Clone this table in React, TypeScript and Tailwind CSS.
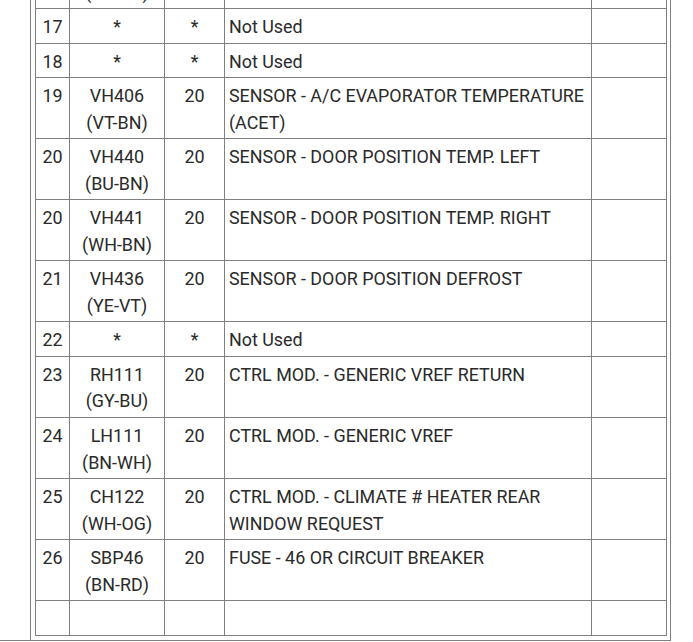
type Row = { pin: string; circuit?: string; color?: string; gauge: string; desc: string };

const rows: Row[] = [
  { pin: '16', circuit: 'VH402', color: '(GY-BN)', gauge: '20', desc: 'SENSOR - A/C PRESSURE' },
  { pin: '17', circuit: '*', gauge: '*', desc: 'Not Used' },
  { pin: '18', circuit: '*', gauge: '*', desc: 'Not Used' },
  { pin: '19', circuit: 'VH406', color: '(VT-BN)', gauge: '20', desc: 'SENSOR - A/C EVAPORATOR TEMPERATURE (ACET)' },
  { pin: '20', circuit: 'VH440', color: '(BU-BN)', gauge: '20', desc: 'SENSOR - DOOR POSITION TEMP. LEFT' },
  { pin: '20', circuit: 'VH441', color: '(WH-BN)', gauge: '20', desc: 'SENSOR - DOOR POSITION TEMP. RIGHT' },
  { pin: '21', circuit: 'VH436', color: '(YE-VT)', gauge: '20', desc: 'SENSOR - DOOR POSITION DEFROST' },
  { pin: '22', circuit: '*', gauge: '*', desc: 'Not Used' },
  { pin: '23', circuit: 'RH111', color: '(GY-BU)', gauge: '20', desc: 'CTRL MOD. - GENERIC VREF RETURN' },
  { pin: '24', circuit: 'LH111', color: '(BN-WH)', gauge: '20', desc: 'CTRL MOD. - GENERIC VREF' },
  { pin: '25', circuit: 'CH122', color: '(WH-OG)', gauge: '20', desc: 'CTRL MOD. - CLIMATE # HEATER REAR WINDOW REQUEST' },
  { pin: '26', circuit: 'SBP46', color: '(BN-RD)', gauge: '20', desc: 'FUSE - 46 OR CIRCUIT BREAKER' },
];

const cell = 'border border-[#808080] align-top pt-[5px] pb-[1.9px] leading-[26.6px]';

export default function App() {
  return (
    <div className="w-[693px] h-[642px] overflow-hidden bg-white font-['Roboto',sans-serif] text-[17.9px] text-[#2a2a2a]">
      <div className="-mt-[53px] w-[671px] border-b border-[#808080]">
        <div className="ml-[30px] border-x border-[#808080] px-[4px] pb-[4px]">
          <table className="w-[631px] table-fixed border-collapse border border-[#808080]">
            <colgroup>
              <col className="w-[34px]" />
              <col className="w-[95px]" />
              <col className="w-[60px]" />
              <col className="w-[367px]" />
              <col className="w-[75px]" />
            </colgroup>
            <tbody>
              {rows.map((r, i) => (
                <tr key={i}>
                  <td className={`${cell} text-center`}>{r.pin}</td>
                  <td className={`${cell} text-center`}>
                    {r.circuit}
                    {r.color && <br />}
                    {r.color}
                  </td>
                  <td className={`${cell} text-center`}>{r.gauge}</td>
                  <td className={`${cell} px-[4px]`}>{r.desc}</td>
                  <td className={cell}></td>
                </tr>
              ))}
              <tr>
                <td className={cell}>&nbsp;</td>
                <td className={cell}></td>
                <td className={cell}></td>
                <td className={cell}></td>
                <td className={cell}></td>
              </tr>
            </tbody>
          </table>
        </div>
      </div>
    </div>
  );
}
